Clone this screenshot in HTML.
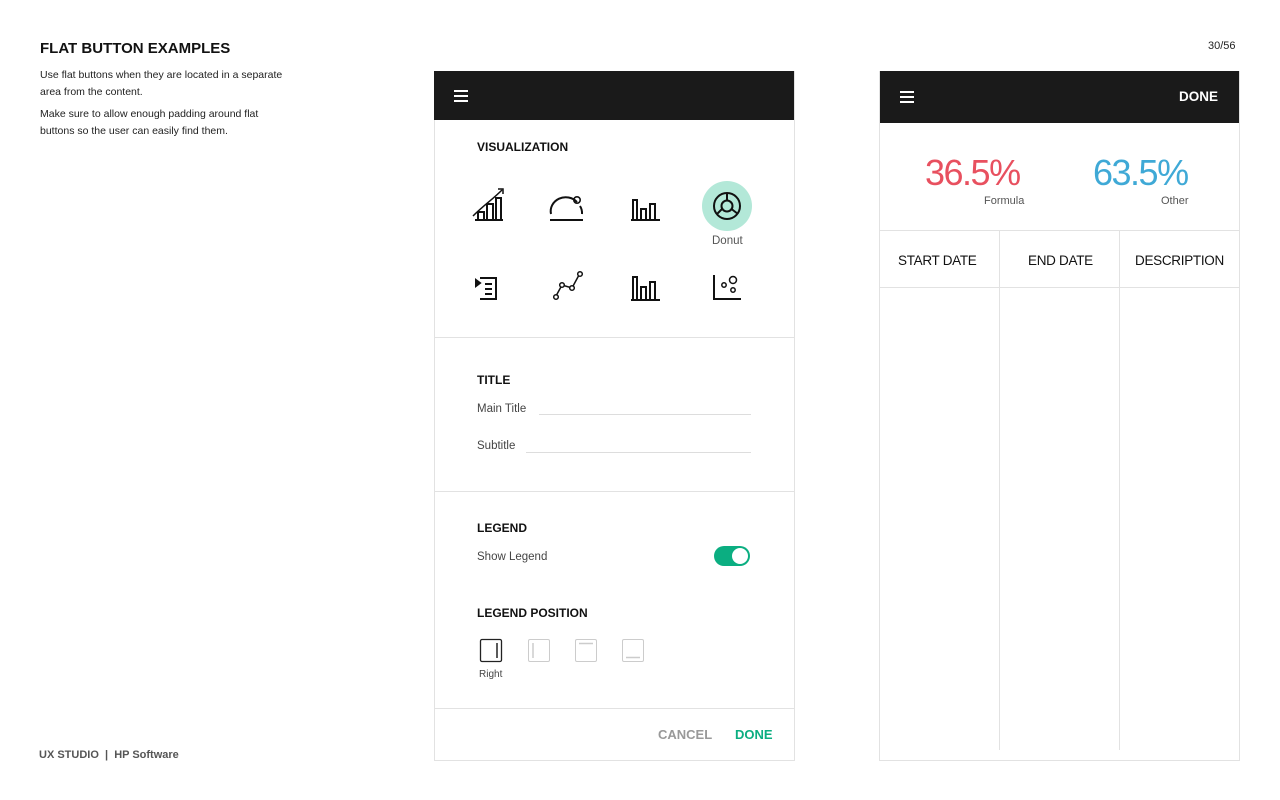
<!DOCTYPE html>
<html><head><meta charset="utf-8"><style>
*{margin:0;padding:0;box-sizing:border-box}
body{width:1280px;height:800px;background:#fff;font-family:"Liberation Sans",sans-serif;color:#222;position:relative;overflow:hidden}
.a{position:absolute}
.hb{position:absolute;width:14px;height:2px;background:#fff}
.lbl{font-size:12px;font-weight:bold;color:#111}
.sm{font-size:11.5px;color:#444}
</style></head><body>
<div class="a" style="left:40px;top:40px;font-size:15px;font-weight:bold;color:#111">FLAT BUTTON EXAMPLES</div>
<div class="a" style="left:40px;top:67px;font-size:10.5px;line-height:17px;color:#222;width:262px">Use flat buttons when they are located in a separate area from the content.</div>
<div class="a" style="left:40px;top:106px;font-size:10.5px;line-height:17px;color:#222;width:250px">Make sure to allow enough padding around flat buttons so the user can easily find them.</div>
<div class="a" style="left:1208px;top:40px;font-size:11px;color:#222">30/56</div>
<div class="a" style="left:39px;top:749px;font-size:11px;font-weight:bold;color:#555">UX STUDIO &nbsp;|&nbsp; HP Software</div>

<!-- left panel -->
<div class="a" style="left:434px;top:71px;width:361px;height:690px;border:1px solid #e2e2e2;border-top:none"></div>
<div class="a" style="left:434px;top:71px;width:360px;height:49px;background:#1a1a1a">
<div class="hb" style="left:20px;top:19px"></div><div class="hb" style="left:20px;top:24px"></div><div class="hb" style="left:20px;top:29px"></div></div>
<div class="a lbl" style="left:477px;top:140px">VISUALIZATION</div>
<svg class="a" style="left:434px;top:120px" width="360" height="200" fill="none" stroke="#111" stroke-width="2">
<path d="M39 96 C50 85 58 80 68 70" stroke-width="1.5"/><path d="M64 69 L69 69 L69 74" stroke-width="1.5"/>
<path d="M41 100 H69 M44 100 V92 H50 V100 M53 100 V84 H59 V100 M62 100 V78 H67 V100"/>
<path d="M116 100 H149 M117 94 A15 14 0 0 1 143 82 M146 86 A15 14 0 0 1 148 94"/><circle cx="143" cy="80" r="3.2" stroke-width="1.6"/>
<path d="M197 100 H226 M199 100 V80 H203 V100 M207 100 V89 H212 V100 M216 100 V84 H221 V100"/>
<circle cx="293" cy="86" r="25" fill="#b3e8d8" stroke="none"/>
<circle cx="293" cy="86" r="13"/><circle cx="293" cy="86" r="5.5"/><path d="M293 73 V80.5 M297.5 89 L304 94 M288 89 L283 94"/>
<path d="M46 158 H62 V179 H46 M51 164 H58 M51 169 H58 M51 174 H58"/><path d="M42 160 L46 163 L42 166 Z" fill="#111"/>
<path d="M122 176 L128 165 L138 168 L145 155" stroke-width="1.5"/><circle cx="122" cy="177" r="2.3" fill="#fff" stroke-width="1.5"/><circle cx="128" cy="165" r="2.3" fill="#fff" stroke-width="1.5"/><circle cx="138" cy="168" r="2.3" fill="#fff" stroke-width="1.5"/><circle cx="146" cy="154" r="2.3" fill="#fff" stroke-width="1.5"/>
<path d="M197 180 H226 M199 180 V157 H203 V180 M207 180 V167 H212 V180 M216 180 V162 H221 V180"/>
<path d="M280 155 V179 H307"/><circle cx="290" cy="165" r="2.2" stroke-width="1.5"/><circle cx="299" cy="160" r="3.5" stroke-width="1.5"/><circle cx="299" cy="170" r="2.2" stroke-width="1.5"/>
</svg>
<div class="a" style="left:712px;top:235px;font-size:11.5px;color:#555">Donut</div>
<div class="a" style="left:434px;top:337px;width:360px;height:1px;background:#e2e2e2"></div>
<div class="a lbl" style="left:477px;top:373px">TITLE</div>
<div class="a sm" style="left:477px;top:403px">Main Title</div>
<div class="a" style="left:539px;top:414px;width:212px;height:1px;background:#ddd"></div>
<div class="a sm" style="left:477px;top:440px">Subtitle</div>
<div class="a" style="left:526px;top:452px;width:225px;height:1px;background:#ddd"></div>
<div class="a" style="left:434px;top:491px;width:360px;height:1px;background:#e2e2e2"></div>
<div class="a lbl" style="left:477px;top:521px">LEGEND</div>
<div class="a sm" style="left:477px;top:551px">Show Legend</div>
<div class="a" style="left:714px;top:546px;width:36px;height:20px;border-radius:10px;background:#0bae81"><div class="a" style="right:2px;top:2px;width:16px;height:16px;border-radius:50%;background:#fff"></div></div>
<div class="a lbl" style="left:477px;top:606px">LEGEND POSITION</div>
<svg class="a" style="left:478px;top:638px" width="170" height="26" fill="none">
<rect x="2.5" y="1.5" width="21" height="22" rx="1.5" stroke="#222" stroke-width="1.3"/><path d="M19 5 V20" stroke="#222" stroke-width="1.5"/>
<rect x="50.5" y="1.5" width="21" height="22" rx="1.5" stroke="#ccc"/><path d="M55 5 V20" stroke="#ccc" stroke-width="1.5"/>
<rect x="97.5" y="1.5" width="21" height="22" rx="1.5" stroke="#ccc"/><path d="M101 5.5 H115" stroke="#ccc" stroke-width="1.5"/>
<rect x="144.5" y="1.5" width="21" height="22" rx="1.5" stroke="#ccc"/><path d="M148 19.5 H162" stroke="#ccc" stroke-width="1.5"/>
</svg>
<div class="a" style="left:479px;top:669px;font-size:10px;color:#444">Right</div>
<div class="a" style="left:434px;top:708px;width:360px;height:1px;background:#e2e2e2"></div>
<div class="a" style="left:658px;top:727px;font-size:13px;font-weight:bold;color:#999">CANCEL</div>
<div class="a" style="left:735px;top:727px;font-size:13px;font-weight:bold;color:#0bae81">DONE</div>

<!-- right panel -->
<div class="a" style="left:879px;top:71px;width:361px;height:690px;border:1px solid #e2e2e2;border-top:none"></div>
<div class="a" style="left:880px;top:71px;width:359px;height:52px;background:#1a1a1a">
<div class="hb" style="left:20px;top:20px"></div><div class="hb" style="left:20px;top:25px"></div><div class="hb" style="left:20px;top:30px"></div>
<div class="a" style="right:21px;top:18px;font-size:13.5px;font-weight:bold;color:#fff">DONE</div></div>
<div class="a" style="left:925px;top:152px;font-size:36px;color:#e8505f;letter-spacing:-1.5px">36.5%</div>
<div class="a" style="left:984px;top:195px;font-size:11px;color:#555">Formula</div>
<div class="a" style="left:1093px;top:152px;font-size:36px;color:#3fa9d6;letter-spacing:-1.5px">63.5%</div>
<div class="a" style="left:1161px;top:195px;font-size:11px;color:#555">Other</div>
<div class="a" style="left:880px;top:230px;width:359px;height:1px;background:#e2e2e2"></div>
<div class="a" style="left:880px;top:287px;width:359px;height:1px;background:#e2e2e2"></div>
<div class="a" style="left:999px;top:230px;width:1px;height:520px;background:#e2e2e2"></div>
<div class="a" style="left:1119px;top:230px;width:1px;height:520px;background:#e2e2e2"></div>
<div class="a" style="left:898px;top:253px;font-size:13.5px;color:#111;letter-spacing:-0.3px">START DATE</div>
<div class="a" style="left:1028px;top:253px;font-size:13.5px;color:#111;letter-spacing:-0.3px">END DATE</div>
<div class="a" style="left:1135px;top:253px;font-size:13.5px;color:#111;letter-spacing:-0.3px">DESCRIPTION</div>
</body></html>
